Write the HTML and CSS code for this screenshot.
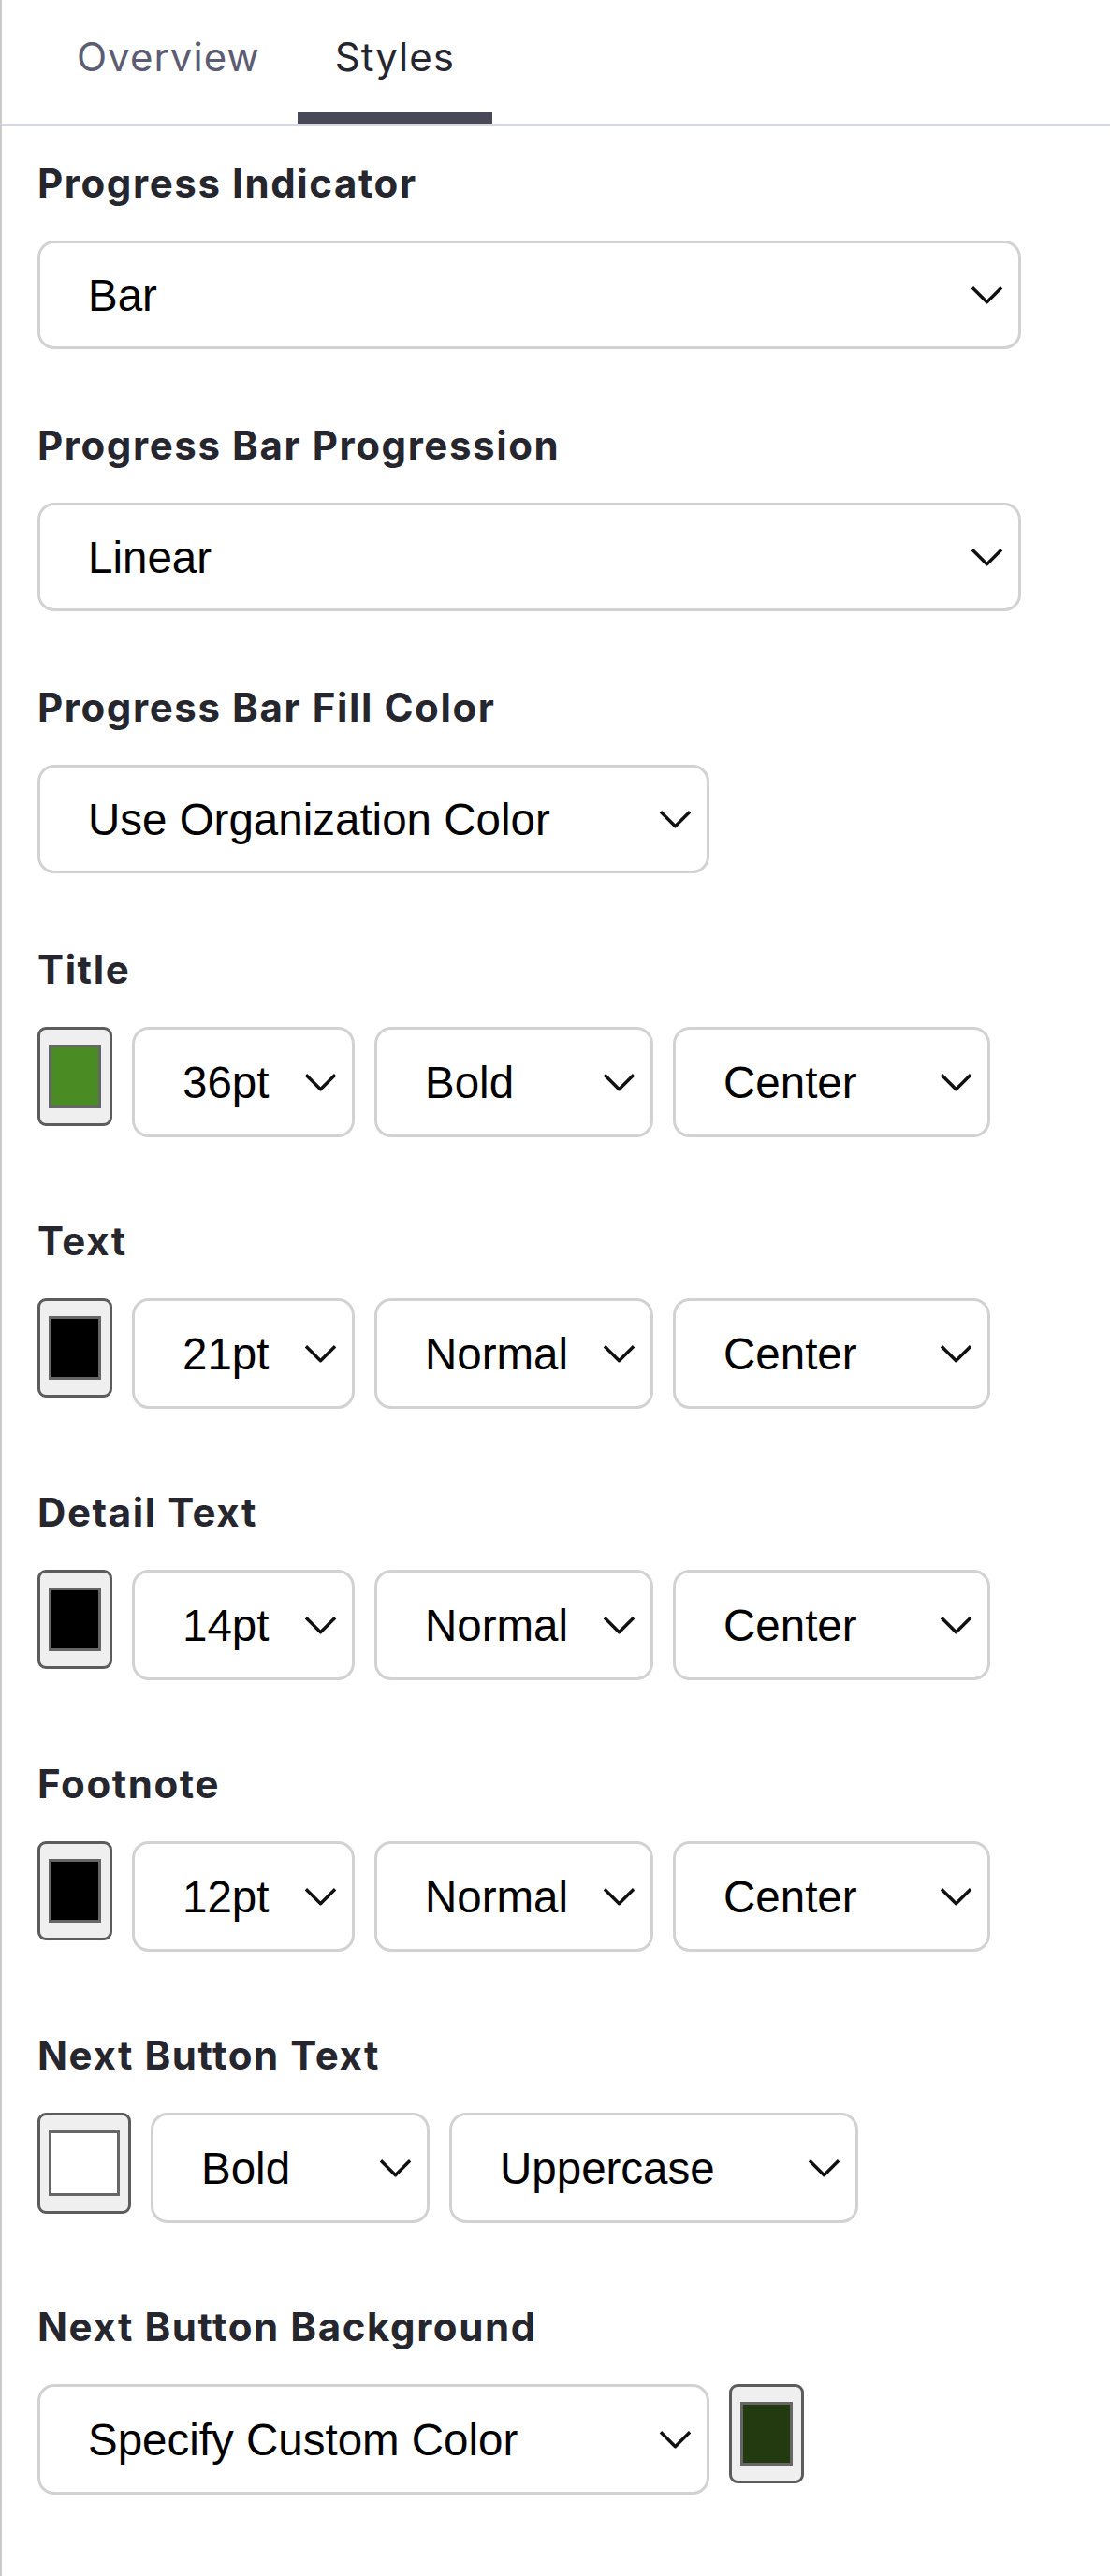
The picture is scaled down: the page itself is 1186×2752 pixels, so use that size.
FILE: index.html
```html
<!DOCTYPE html>
<html lang="en">
<head>
  <meta charset="UTF-8">
  <meta name="viewport" content="width=device-width, initial-scale=1.0">
  <title>Styles</title>
  <link rel="stylesheet" href="styles.css">
</head>
<body>
  <div class="panel">
    <!-- Tabs -->
    <div class="tabs">
      <div class="tab">Overview</div>
      <div class="tab active">Styles</div>
    </div>

    <div class="content">
      <div class="field">
        <div class="label">Progress Indicator</div>
        <div class="select w-full"><span>Bar</span><svg class="chev" viewBox="0 0 36 22"><path d="M2 3 L18 19 L34 3"/></svg></div>
      </div>

      <div class="field">
        <div class="label">Progress Bar Progression</div>
        <div class="select w-full"><span>Linear</span><svg class="chev" viewBox="0 0 36 22"><path d="M2 3 L18 19 L34 3"/></svg></div>
      </div>

      <div class="field">
        <div class="label">Progress Bar Fill Color</div>
        <div class="select w-mid"><span>Use Organization Color</span><svg class="chev" viewBox="0 0 36 22"><path d="M2 3 L18 19 L34 3"/></svg></div>
      </div>

      <div class="field has-row">
        <div class="label">Title</div>
        <div class="row">
          <div class="swatch"><div class="swatch-color green"></div></div>
          <div class="select w-size"><span>36pt</span><svg class="chev" viewBox="0 0 36 22"><path d="M2 3 L18 19 L34 3"/></svg></div>
          <div class="select w-weight"><span>Bold</span><svg class="chev" viewBox="0 0 36 22"><path d="M2 3 L18 19 L34 3"/></svg></div>
          <div class="select w-align"><span>Center</span><svg class="chev" viewBox="0 0 36 22"><path d="M2 3 L18 19 L34 3"/></svg></div>
        </div>
      </div>

      <div class="field has-row">
        <div class="label">Text</div>
        <div class="row">
          <div class="swatch"><div class="swatch-color black"></div></div>
          <div class="select w-size"><span>21pt</span><svg class="chev" viewBox="0 0 36 22"><path d="M2 3 L18 19 L34 3"/></svg></div>
          <div class="select w-weight"><span>Normal</span><svg class="chev" viewBox="0 0 36 22"><path d="M2 3 L18 19 L34 3"/></svg></div>
          <div class="select w-align"><span>Center</span><svg class="chev" viewBox="0 0 36 22"><path d="M2 3 L18 19 L34 3"/></svg></div>
        </div>
      </div>

      <div class="field has-row">
        <div class="label">Detail Text</div>
        <div class="row">
          <div class="swatch"><div class="swatch-color black"></div></div>
          <div class="select w-size"><span>14pt</span><svg class="chev" viewBox="0 0 36 22"><path d="M2 3 L18 19 L34 3"/></svg></div>
          <div class="select w-weight"><span>Normal</span><svg class="chev" viewBox="0 0 36 22"><path d="M2 3 L18 19 L34 3"/></svg></div>
          <div class="select w-align"><span>Center</span><svg class="chev" viewBox="0 0 36 22"><path d="M2 3 L18 19 L34 3"/></svg></div>
        </div>
      </div>

      <div class="field has-row">
        <div class="label">Footnote</div>
        <div class="row">
          <div class="swatch"><div class="swatch-color black"></div></div>
          <div class="select w-size"><span>12pt</span><svg class="chev" viewBox="0 0 36 22"><path d="M2 3 L18 19 L34 3"/></svg></div>
          <div class="select w-weight"><span>Normal</span><svg class="chev" viewBox="0 0 36 22"><path d="M2 3 L18 19 L34 3"/></svg></div>
          <div class="select w-align"><span>Center</span><svg class="chev" viewBox="0 0 36 22"><path d="M2 3 L18 19 L34 3"/></svg></div>
        </div>
      </div>

      <div class="field has-row">
        <div class="label">Next Button Text</div>
        <div class="row">
          <div class="swatch wide"><div class="swatch-color white"></div></div>
          <div class="select w-weight"><span>Bold</span><svg class="chev" viewBox="0 0 36 22"><path d="M2 3 L18 19 L34 3"/></svg></div>
          <div class="select w-case"><span>Uppercase</span><svg class="chev" viewBox="0 0 36 22"><path d="M2 3 L18 19 L34 3"/></svg></div>
        </div>
      </div>

      <div class="field has-row">
        <div class="label">Next Button Background</div>
        <div class="row">
          <div class="select w-mid"><span>Specify Custom Color</span><svg class="chev" viewBox="0 0 36 22"><path d="M2 3 L18 19 L34 3"/></svg></div>
          <div class="swatch"><div class="swatch-color dark-green"></div></div>
        </div>
      </div>
    </div>
  </div>
</body>
</html>
```

FILE: styles.css
```css
/* General Styles */
body {
  margin: 0;
  padding: 0;
  background: #fff;
  font-family: 'Inter', 'Noto Sans', sans-serif;
}

.panel {
  min-height: 2752px;
  border-left: 2px solid #cacaca;
  box-sizing: border-box;
}

/* Tabs */
.tabs {
  display: flex;
  height: 135px;
  padding-left: 40px;
  border-bottom: 3px solid #d8d8e4;
  box-sizing: border-box;
}

.tab {
  height: 132px;
  padding: 37px 40px 0;
  box-sizing: border-box;
  font-size: 42px;
  line-height: 48px;
  letter-spacing: 1px;
  color: #5c5c72;
}

.tab.active {
  color: #26262f;
  border-bottom: 12px solid #474956;
}

/* Fields */
.content {
  padding: 37px 0 0 38px;
}

.field {
  margin-bottom: 79px;
}

.field.has-row {
  margin-bottom: 87px;
}

.label {
  font-size: 42px;
  line-height: 48px;
  font-weight: 700;
  letter-spacing: 1.6px;
  color: #26262e;
  margin-bottom: 37px;
}

.row {
  display: flex;
  align-items: flex-start;
  gap: 21px;
}

/* Select boxes */
.select {
  display: flex;
  align-items: center;
  justify-content: space-between;
  height: 116px;
  padding: 0 16px 0 51px;
  border: 3px solid #d2d2d2;
  border-radius: 18px;
  box-sizing: border-box;
  background: #fff;
  font-family: 'Liberation Sans', Arial, sans-serif;
  font-size: 47.5px;
  color: #000;
}

.row .select {
  height: 118px;
}

.chev {
  width: 35px;
  height: 22px;
  flex-shrink: 0;
}

.chev path {
  fill: none;
  stroke: #111;
  stroke-width: 3.5;
  stroke-linejoin: round;
}

.w-full { width: 1051px; }
.w-mid { width: 718px; }
.w-size { width: 238px; }
.w-weight { width: 298px; }
.w-align { width: 339px; }
.w-case { width: 437px; }

/* Color swatches */
.swatch {
  display: flex;
  width: 80px;
  height: 106px;
  padding: 16px 9px;
  border: 3px solid #5c5c5c;
  border-radius: 9px;
  background: #efefef;
  box-sizing: border-box;
}

.swatch.wide {
  width: 100px;
  height: 108px;
}

.swatch-color {
  flex: 1;
  border: 3px solid #666;
}

.green { background: #4a8c23; }
.black { background: #000; }
.white { background: #fff; }
.dark-green { background: #233a10; }
```
